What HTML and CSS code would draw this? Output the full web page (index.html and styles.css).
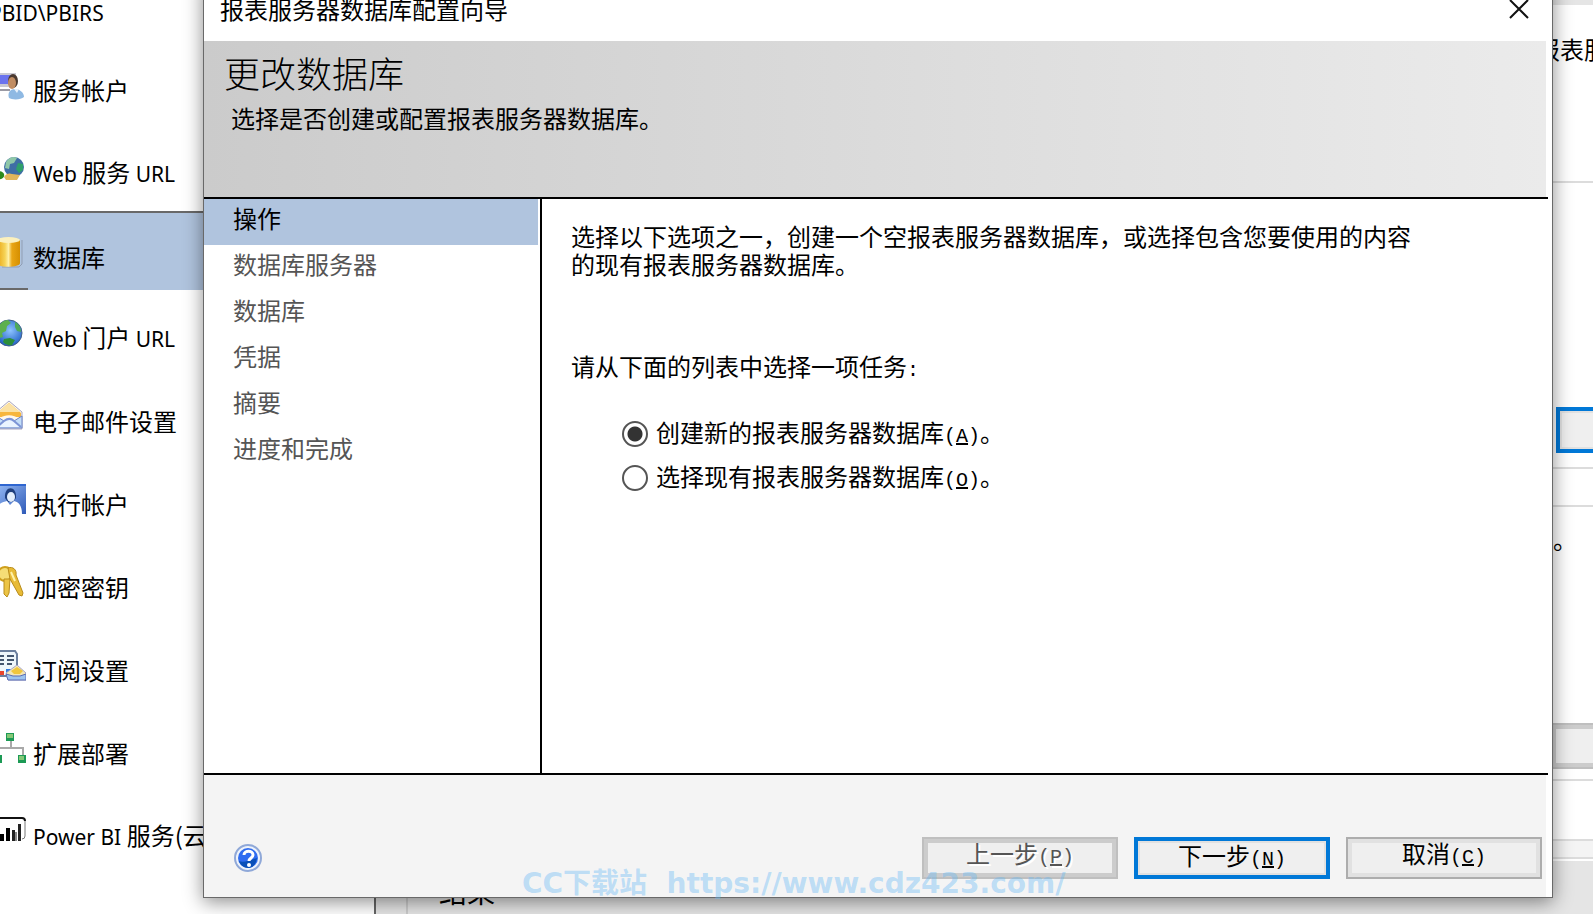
FILE: index.html
```
<!DOCTYPE html>
<html lang="zh-CN">
<head>
    <meta charset="UTF-8">
    <meta name="viewport" content="width=device-width, initial-scale=1.0">
    <title>报表服务器数据库配置向导</title>
    <link rel="stylesheet" href="styles.css">
</head>
<body>
    <div class="app">
        <nav class="sidebar">
            <div class="instance latin">PBID\PBIRS</div>
            <a class="item" href="#">
                <svg class="icon" viewBox="0 0 32 32">
                    <rect x="0" y="4" width="22" height="14" fill="#c9c9d2"/>
                    <rect x="0" y="6" width="18" height="9" fill="#6a73ee"/>
                    <path d="M0 20h16v2H0z" fill="#9a9aa4"/>
                    <path d="M15 29c-2-6 2-9 6-9s9 3 9 8c-3 3-12 3-15 1z" fill="#8fb9e3"/>
                    <path d="M20 20l3 4 2-4z" fill="#e8f1fb"/>
                    <ellipse cx="19" cy="12" rx="5" ry="7" fill="#4a3a30"/>
                    <ellipse cx="18" cy="14" rx="4" ry="6" fill="#c18d63"/>
                </svg>
                <span>服务帐户</span>
            </a>
            <a class="item" href="#">
                <svg class="icon" viewBox="0 0 32 32">
                    <circle cx="20" cy="15" r="10" fill="#3f6ea5"/>
                    <path d="M12 10c3-5 8-6 11-4l-3 5-4 1-1 5-4-1z" fill="#8fc7a8"/>
                    <path d="M24 11l5 1v6l-4 3-3-4z" fill="#2fa06a"/>
                    <path d="M10 25c2-4 6-4 8-3l8 1-3 5H12z" fill="#e2b65a"/>
                    <path d="M0 21c4-3 9-2 10 1 1 4-3 6-10 6z" fill="#2c8a1c"/>
                </svg>
                <span><span class="latin">Web</span> 服务 <span class="latin">URL</span></span>
            </a>
            <a class="item selected" href="#">
                <svg class="icon" viewBox="0 0 32 32">
                    <defs>
                        <linearGradient id="gold" x1="0" x2="1">
                            <stop offset="0" stop-color="#e9a514"/>
                            <stop offset=".35" stop-color="#f6d458"/>
                            <stop offset=".5" stop-color="#fff1a8"/>
                            <stop offset=".65" stop-color="#e9a514"/>
                            <stop offset="1" stop-color="#d58f00"/>
                        </linearGradient>
                    </defs>
                    <path d="M28 4v24l-3 3H8" fill="none" stroke="#8f9db3" stroke-width="1"/>
                    <path d="M3 4v23c0 5 23 5 23 0V4z" fill="url(#gold)"/>
                    <ellipse cx="14.500" cy="4" rx="11.500" ry="3" fill="#fbf0bd"/>
                </svg>
                <span>数据库</span>
            </a>
            <a class="item" href="#">
                <svg class="icon" viewBox="0 0 32 32">
                    <defs>
                        <radialGradient id="globe" cx=".55" cy=".4" r=".6">
                            <stop offset="0" stop-color="#8ec4ff"/>
                            <stop offset="1" stop-color="#1f5fc4"/>
                        </radialGradient>
                    </defs>
                    <circle cx="15" cy="16" r="13" fill="url(#globe)" stroke="#41608a"/>
                    <path d="M4 10c3-5 7-7 10-7l3 3-4 3-1 5-4 2 1 4-4 1c-2-4-2-8-1-11z" fill="#5cb04f"/>
                    <path d="M21 5c4 2 6 6 6 10l-4-1-2-4z" fill="#4fa95a"/>
                    <path d="M10 22l6-1 5 2-3 5c-4 1-7-1-9-3z" fill="#2c8f3a"/>
                </svg>
                <span><span class="latin">Web</span> 门户 <span class="latin">URL</span></span>
            </a>
            <a class="item" href="#">
                <svg class="icon" viewBox="0 0 32 32">
                    <path d="M2 12L15 1l13 11v17H2z" fill="#fdf6e6" stroke="#a9a7c2"/>
                    <path d="M3 13L15 3l12 10v4H3z" fill="#f7b63c"/>
                    <path d="M4 12L15 3l11 9z" fill="#fbe2a4"/>
                    <path d="M5 19c5-5 15-5 20 0v3H5z" fill="#fff8ea"/>
                    <path d="M2 16l8 5h10l8-5v12H2z" fill="#c4def8" stroke="#6d83c6"/>
                    <path d="M3 27l7-6c4-3 7-3 10 0l7 6" fill="#eaf4ff" stroke="#7d95d6" stroke-width="2"/>
                </svg>
                <span>电子邮件设置</span>
            </a>
            <a class="item" href="#">
                <svg class="icon" viewBox="0 0 32 32">
                    <defs>
                        <linearGradient id="photo" x1="0" x2="1" y2="1">
                            <stop offset="0" stop-color="#9cc0f8"/>
                            <stop offset="1" stop-color="#2f5ab8"/>
                        </linearGradient>
                    </defs>
                    <rect x="0" y="1" width="32" height="30" fill="url(#photo)"/>
                    <rect x="0" y="1" width="32" height="2" fill="#2f66d0"/>
                    <path d="M11 15c-1-13 12-13 11 0l-3 4h-5z" fill="#1f3f7d"/>
                    <ellipse cx="17" cy="14" rx="4" ry="5" fill="#e4effc"/>
                    <path d="M2 31c0-10 6-12 11-13l3 4 4-4c5 1 8 5 8 13z" fill="#fff"/>
                </svg>
                <span>执行帐户</span>
            </a>
            <a class="item" href="#">
                <svg class="icon" viewBox="0 0 32 32">
                    <circle cx="11" cy="8" r="7" fill="#f5dd76" stroke="#cf9f1c" stroke-width="2"/>
                    <path d="M14 2c5-2 9 2 8 7l7 18-1 3-3-1-9-16z" fill="#e8bb36" stroke="#b98c1a"/>
                    <path d="M10 13h6l-1 14-2 4-3-3z" fill="#ecc445" stroke="#b98c1a"/>
                    <path d="M17 6l4 9" stroke="#fff2a8" stroke-width="2"/>
                </svg>
                <span>加密密钥</span>
            </a>
            <a class="item" href="#">
                <svg class="icon" viewBox="0 0 32 32">
                    <path d="M0 2h21l2 3v22H0z" fill="#eef6fb" stroke="#6b7f9e" stroke-width="2"/>
                    <path d="M6 7h4M13 7h7M6 11h4M13 11h7M6 15h4M13 15h5" stroke="#44566f" stroke-width="2"/>
                    <rect x="6" y="22" width="4" height="4" fill="#e8452c"/>
                    <rect x="12" y="20" width="5" height="5" fill="#2e7be0"/>
                    <path d="M12 24l11-8 9 8v7H14z" fill="#f3e6b4" stroke="#a8a6c6"/>
                    <path d="M17 22l6-4 6 4-3 3h-6z" fill="#f0c63c"/>
                    <path d="M12 25l7 2h7l6-2v6H14z" fill="#9dc4ee" stroke="#5a6cb4"/>
                </svg>
                <span>订阅设置</span>
            </a>
            <a class="item" href="#">
                <svg class="icon" viewBox="0 0 32 32">
                    <path d="M17 8v8M3 24v-8h26v8" fill="none" stroke="#a9a9a9" stroke-width="2"/>
                    <path d="M12 1h8v8h-8zM0 23h8v8H0zM24 23h8v8h-8z" fill="#1c9a55"/>
                    <path d="M13 2h6v4h-6zM1 24h5v4H1zM25 24h5v4h-5z" fill="#86c777"/>
                </svg>
                <span>扩展部署</span>
            </a>
            <a class="item" href="#">
                <svg class="icon" viewBox="0 0 32 32">
                    <path d="M0 3h28q3 0 3 3" fill="none" stroke="#111" stroke-width="2"/>
                    <path d="M31 6v15q0 3-3 3" fill="none" stroke="#777" stroke-width="1"/>
                    <path d="M6 19h4v7H6zM12 13h4v13h-4z" fill="#000"/>
                    <path d="M18 15h3v11h-3zM24 9h3v17h-3z" fill="#222"/>
                    <path d="M21 17h2v9h-2z" fill="#888"/>
                </svg>
                <span><span class="latin">Power BI</span> 服务(云)</span>
            </a>
        </nav>

        <main class="main">
            <section class="panel intro"><p>报表服务器</p></section>
            <section class="panel current"><button class="btn default" type="button" aria-label="更改数据库"></button></section>
            <section class="panel divider"></section>
            <section class="panel credentials">
                <p>。</p>
                <button class="btn" type="button" disabled aria-label="更改凭据"></button>
            </section>
            <section class="panel spacer"></section>
            <section class="panel strip"></section>
            <section class="results">结果</section>
        </main>
    </div>

    <div class="dialog" role="dialog" aria-labelledby="dialog-title">
        <div class="titlebar">
            <span id="dialog-title">报表服务器数据库配置向导</span>
            <button class="close" type="button" aria-label="关闭">
                <svg viewBox="0 0 20 20"><path d="M1 1l18 18M19 1L1 19" stroke="#111" stroke-width="2"/></svg>
            </button>
        </div>
        <header class="banner">
            <h1>更改数据库</h1>
            <p>选择是否创建或配置报表服务器数据库。</p>
        </header>
        <div class="body">
            <ol class="steps">
                <li class="active">操作</li>
                <li>数据库服务器</li>
                <li>数据库</li>
                <li>凭据</li>
                <li>摘要</li>
                <li>进度和完成</li>
            </ol>
            <form class="content">
                <p class="description">选择以下选项之一，创建一个空报表服务器数据库，或选择包含您要使用的内容的现有报表服务器数据库。</p>
                <p class="task">请从下面的列表中选择一项任务<span class="mono">:</span></p>
                <div class="options">
                    <label><input type="radio" name="task" checked><span>创建新的报表服务器数据库<span class="mono">(<u>A</u>)</span>。</span></label>
                    <label><input type="radio" name="task"><span>选择现有报表服务器数据库<span class="mono">(<u>O</u>)</span>。</span></label>
                </div>
            </form>
        </div>
        <footer class="footer">
            <a class="help" href="#" aria-label="帮助">
                <svg viewBox="0 0 28 28">
                    <circle cx="14" cy="14" r="13" fill="#eef3fb" stroke="#8fa8d8" stroke-width="2"/>
                    <circle cx="14" cy="14" r="10" fill="#2f6cf0"/>
                    <path d="M5 17c4 2 9 0 18-3-1 7-5 10-9 10s-8-3-9-7z" fill="#0a50b8"/>
                    <path d="M10 11c0-5 9-5 9 0 0 3-4 3-4 6" fill="none" stroke="#fff" stroke-width="3"/>
                    <circle cx="15" cy="21" r="2" fill="#fff"/>
                </svg>
            </a>
            <div class="buttons">
                <button class="btn" type="button" disabled>上一步<span class="mono">(<u>P</u>)</span></button>
                <button class="btn default" type="button">下一步<span class="mono">(<u>N</u>)</span></button>
                <button class="btn" type="button">取消<span class="mono">(<u>C</u>)</span></button>
            </div>
        </footer>
    </div>

    <div class="watermark">CC下载站&nbsp; https://www.cdz423.com/</div>
</body>
</html>
```
FILE: styles.css
```
* {
    box-sizing: border-box;
}
body {
    margin: 0;
    position: relative;
    height: 100vh;
    overflow: hidden;
    background: #fff;
    color: #000;
    font-family: "Noto Sans CJK SC", sans-serif;
    font-size: 24px;
    line-height: 28px;
}
h1, p, ol {
    margin: 0;
    padding: 0;
    font-weight: normal;
}
button {
    font: inherit;
    color: inherit;
}
.latin {
    font-family: "Noto Sans", sans-serif;
    font-size: 21px;
}
.mono {
    font-family: "Liberation Mono", monospace;
    font-size: 20px;
}

/* main window */
.app {
    display: flex;
    height: 100%;
}
.sidebar {
    flex: none;
    width: 376px;
    border-right: 2px solid #666;
    overflow: hidden;
    display: flex;
    flex-direction: column;
    gap: 3px;
}
.instance {
    height: 42px;
    margin-left: -11px;
    line-height: 26px;
    white-space: nowrap;
}
.item {
    flex: none;
    height: 80px;
    margin-left: -6px;
    display: flex;
    align-items: center;
    gap: 7px;
    color: #000;
    text-decoration: none;
    white-space: nowrap;
}
.item span {
    padding-top: 10px;
}
.item .latin {
    padding-top: 0;
}
.icon {
    width: 32px;
    height: 32px;
    flex: none;
}
.item.selected {
    height: 79px;
    background: #b0c4de;
    border-top: 2px solid #696969;
    position: relative;
}
.item.selected::after {
    content: "";
    position: absolute;
    left: 0;
    bottom: 0;
    width: 34px;
    height: 2px;
    background: #696969;
}
.main {
    flex: 1;
    min-width: 0;
    padding-top: 5px;
    background: #e5e5e5;
    display: flex;
    flex-direction: column;
}
.panel {
    flex: none;
    margin-left: 30px;
    background: #fff;
    border-left: 2px solid #ccc;
    border-bottom: 2px solid #dcdcdc;
    overflow: hidden;
    display: flex;
    flex-direction: column;
    align-items: flex-end;
}
.intro {
    height: 178px;
    padding-top: 30px;
}
.intro p {
    width: 57px;
    white-space: nowrap;
}
.current {
    height: 286px;
    padding-top: 224px;
}
.panel .btn {
    height: 46px;
    margin-right: -159px;
}
.divider {
    height: 38px;
}
.credentials {
    height: 274px;
    padding-top: 18px;
}
.credentials p {
    width: 40px;
    margin-bottom: 170px;
}
.credentials .btn {
    margin-right: -153px;
}
.spacer {
    height: 60px;
}
.strip {
    height: 18px;
    background: #f4f4f4;
}
.results {
    flex: 1;
    margin-left: 30px;
    padding: 16px 31px;
    border-left: 2px solid #ccc;
    border-top: 2px solid #fff;
    font-size: 28px;
}

/* wizard */
.dialog {
    position: absolute;
    left: 203px;
    right: 40px;
    top: -22px;
    background: #fff;
    border: 1px solid #696969;
    box-shadow: 0 4px 18px rgba(0, 0, 0, 0.45);
}
.titlebar {
    height: 62px;
    padding: 0 23px 2px 16px;
    display: flex;
    align-items: center;
    justify-content: space-between;
}
.close {
    width: 20px;
    height: 20px;
    padding: 0;
    border: 0;
    background: none;
}
.close svg {
    display: block;
}
.banner {
    min-height: 158px;
    margin-right: 4px;
    padding: 11px 20px;
    border-bottom: 2px solid #000;
    background: linear-gradient(to right, #cbcbcb, #ebebeb) no-repeat;
    background-size: calc(100% - 2px) 100%;
}
.banner h1 {
    font-size: 36px;
    line-height: 40px;
    font-weight: 300;
}
.banner p {
    margin-top: 12px;
    padding-left: 7px;
}
.body {
    min-height: 576px;
    margin-right: 4px;
    border-bottom: 2px solid #000;
    display: flex;
}
.steps {
    flex: none;
    width: 336px;
    padding-right: 2px;
    list-style: none;
    color: #555;
}
.steps li {
    height: 46px;
    padding: 5px 29px;
}
.steps .active {
    background: #b0c4de;
    color: #000;
}
.content {
    flex: 1;
    padding: 23px 29px;
    border-left: 2px solid #000;
}
.description {
    max-width: 860px;
}
.task {
    margin-top: 74px;
}
.options {
    margin-top: 35px;
    padding-left: 51px;
    display: flex;
    flex-direction: column;
    align-items: flex-start;
    gap: 16px;
}
.options label {
    height: 28px;
    display: flex;
    align-items: center;
}
input[type="radio"] {
    appearance: none;
    width: 26px;
    height: 26px;
    margin: 0 8px 0 0;
    border: 2px solid #555;
    border-radius: 50%;
    background: #fff;
}
input[type="radio"]:checked {
    background: radial-gradient(circle, #333 7px, #fff 8px);
}
.footer {
    min-height: 122px;
    margin-right: 6px;
    padding: 44px 4px 0 30px;
    background: #f4f4f4;
    display: flex;
    align-items: center;
    justify-content: space-between;
}
.help svg {
    display: block;
    width: 28px;
    height: 28px;
}
.buttons {
    display: flex;
    gap: 16px;
}
.btn {
    flex: none;
    width: 196px;
    height: 42px;
    padding: 0 0 6px;
    border: 2px solid #adadad;
    background: #efefef;
    box-shadow: inset 0 0 0 4px #e1e1e1;
    line-height: 28px;
}
.btn.default {
    border: 4px solid #0078d7;
    box-shadow: inset 0 0 0 2px #e1e1e1;
}
.btn:disabled {
    border-color: #bfbfbf;
    box-shadow: inset 0 0 0 4px #ccc;
    color: #555;
    text-shadow: 2px 2px 0 #fff;
}

.watermark {
    position: absolute;
    left: 522px;
    bottom: 12px;
    font-family: "DejaVu Sans", "Noto Sans CJK SC", sans-serif;
    font-size: 28px;
    font-weight: bold;
    line-height: 36px;
    color: rgba(100, 185, 245, 0.4);
    white-space: nowrap;
    pointer-events: none;
}
```
